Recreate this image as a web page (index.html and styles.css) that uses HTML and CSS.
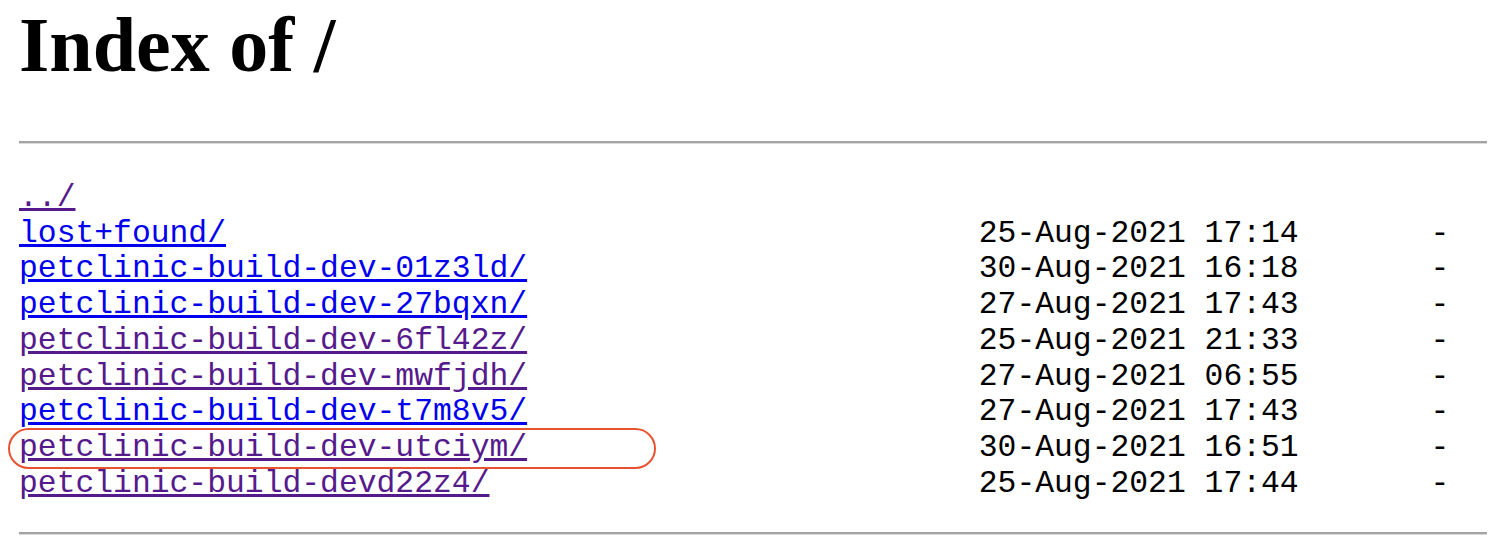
FILE: index.html
```html
<!DOCTYPE html>
<html>
<head>
<meta charset="utf-8">
<title>Index of /</title>
<link rel="stylesheet" href="styles.css">
</head>
<body>
<div class="page">
<h1 class="title">Index of /</h1>
<hr class="rule rule-top">
<pre class="listing"><a class="link visited" href="../">../</a>
<a class="link fresh" href="lost+found/">lost+found/</a>                                        25-Aug-2021 17:14       -
<a class="link fresh" href="petclinic-build-dev-01z3ld/">petclinic-build-dev-01z3ld/</a>                        30-Aug-2021 16:18       -
<a class="link fresh" href="petclinic-build-dev-27bqxn/">petclinic-build-dev-27bqxn/</a>                        27-Aug-2021 17:43       -
<a class="link visited" href="petclinic-build-dev-6fl42z/">petclinic-build-dev-6fl42z/</a>                        25-Aug-2021 21:33       -
<a class="link visited" href="petclinic-build-dev-mwfjdh/">petclinic-build-dev-mwfjdh/</a>                        27-Aug-2021 06:55       -
<a class="link fresh" href="petclinic-build-dev-t7m8v5/">petclinic-build-dev-t7m8v5/</a>                        27-Aug-2021 17:43       -
<a class="link visited" href="petclinic-build-dev-utciym/">petclinic-build-dev-utciym/</a>                        30-Aug-2021 16:51       -
<a class="link visited" href="petclinic-build-devd22z4/">petclinic-build-devd22z4/</a>                          25-Aug-2021 17:44       -
</pre>
<hr class="rule rule-bottom">
<div class="highlight"></div>
</div>
</body>
</html>
```
FILE: styles.css
```css
html, body {
  background: #ffffff;
}
body {
  margin: 0;
  font-family: "Liberation Serif", "Times New Roman", serif;
  color: #000000;
}
.page {
  position: relative;
  padding: 0 5px 0 19px;
}
.title {
  margin: 0;
  font-family: "Liberation Serif", "Times New Roman", serif;
  font-weight: bold;
  font-size: 78px;
  line-height: 89px;
}
.rule {
  height: 0;
  border: 0;
  border-top: 2px solid #a3a3a3;
  border-bottom: 1px solid #dadada;
  margin: 0;
}
.rule-top {
  margin-top: 52px;
}
.listing {
  margin: 36px 0 0 0;
  font-family: "Liberation Mono", "Courier New", monospace;
  font-size: 31.36px;
  line-height: 35.7px;
  color: #000000;
}
.rule-bottom {
  margin-top: 31px;
}
.link {
  text-decoration: underline;
}
.fresh {
  color: #0000ee;
}
.visited {
  color: #551a8b;
}
.highlight {
  position: absolute;
  left: 8px;
  top: 428px;
  width: 644px;
  height: 37px;
  border: 2px solid #e8532f;
  border-radius: 21px;
}
```
